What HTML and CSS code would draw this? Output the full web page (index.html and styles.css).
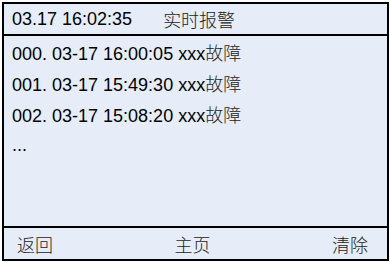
FILE: index.html
```html
<!DOCTYPE html>
<html lang="zh-CN">
<head>
<meta charset="utf-8">
<title>实时报警</title>
<link rel="stylesheet" href="styles.css">
</head>
<body>
<div class="panel">
  <div class="header">
    <span class="time">03.17 16:02:35</span>
    <span class="title cjk">实时报警</span>
  </div>
  <div class="list">
    <div class="row">000. 03-17 16:00:05 xxx<span class="cjk">故障</span></div>
    <div class="row">001. 03-17 15:49:30 xxx<span class="cjk">故障</span></div>
    <div class="row">002. 03-17 15:08:20 xxx<span class="cjk">故障</span></div>
    <div class="row">...</div>
  </div>
  <div class="footer">
    <span class="btn cjk">返回</span>
    <span class="btn cjk">主页</span>
    <span class="btn cjk">清除</span>
  </div>
</div>
</body>
</html>
```
FILE: styles.css
```css
html, body {
  margin: 0;
  padding: 0;
  background: #ffffff;
}
body {
  font-family: "Liberation Sans", Arial, "Noto Sans CJK SC", sans-serif;
  font-size: 18px;
  color: #000;
}
.panel {
  margin: 2px 0 0 2px;
  width: 387px;
  height: 259px;
  box-sizing: border-box;
  border: 2px solid #000;
  background: #e6edf8;
  display: flex;
  flex-direction: column;
}
.cjk {
  font-family: "Noto Sans CJK SC", sans-serif;
  font-weight: 300;
  color: #222;
}
.header {
  height: 32px;
  box-sizing: border-box;
  border-bottom: 2px solid #000;
  display: flex;
  align-items: center;
  padding-left: 8px;
  gap: 31px;
  line-height: 30px;
}
.list {
  flex: 1;
  padding: 1px 0 0 8px;
}
.row {
  height: 31px;
  line-height: 31px;
  white-space: nowrap;
}
.footer {
  height: 33px;
  box-sizing: border-box;
  border-top: 2px solid #000;
  display: flex;
  justify-content: space-between;
  align-items: center;
  padding: 0 19px 0 13px;
}
.btn {
  line-height: 30px;
}
```
